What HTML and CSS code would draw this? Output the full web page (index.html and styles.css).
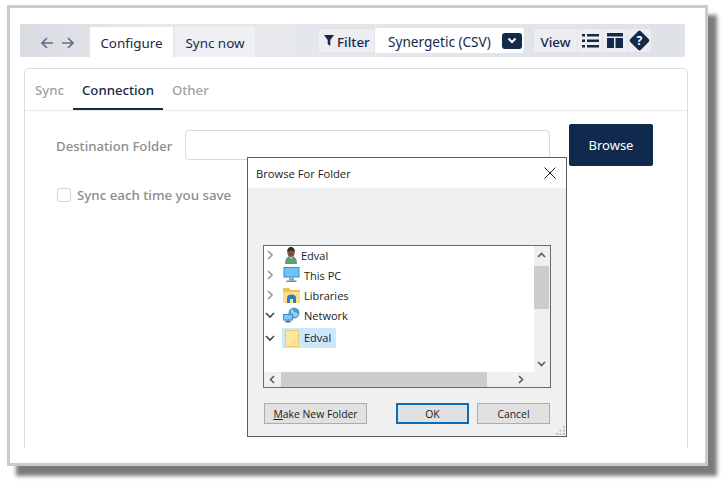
FILE: index.html
```html
<!DOCTYPE html>
<html lang="en">
<head>
<meta charset="utf-8">
<title>Browse For Folder</title>
<link rel="stylesheet" href="styles.css">
</head>
<body>
<div class="frame">
  <div class="toolbar">
    <div class="nav">
      <svg width="14" height="14" viewBox="0 0 14 14" class="arrow"><path d="M13 7H2M7 2L2 7l5 5" /></svg>
      <svg width="14" height="14" viewBox="0 0 14 14" class="arrow"><path d="M1 7h11M7 2l5 5-5 5" /></svg>
    </div>
    <div class="tab tab-active">Configure</div>
    <div class="tab tab-idle">Sync now</div>
    <div class="tools">
      <div class="group filter">
        <svg width="10" height="11" viewBox="0 0 10 11" class="solid"><path d="M0 0h10L6.300 5v6L3.700 9V5z"/></svg>
        <span class="tool-text">Filter</span>
      </div>
      <div class="select">
        <span class="tool-text">Synergetic (CSV)</span>
        <span class="caret"><svg width="10" height="7" viewBox="0 0 10 7"><path d="M1.500 1.500L5 5l3.500-3.500" /></svg></span>
      </div>
      <div class="group view">
        <div class="cell cell-view"><span class="tool-text">View</span></div>
        <div class="cell cell-icon">
          <svg width="17" height="14" viewBox="0 0 17 14" class="solid"><path d="M0 0h3v2.500H0zM5 0h12v2.500H5zM0 5.500h3V8H0zM5 5.500h12V8H5zM0 11h3v2.500H0zM5 11h12v2.500H5z"/></svg>
        </div>
        <div class="cell cell-icon">
          <svg width="16" height="15" viewBox="0 0 16 15" class="solid"><path d="M0 0h16v3.500H0zM0 5h7v10H0zM8.500 5H16v10H8.500z"/></svg>
        </div>
        <div class="cell cell-help">
          <span class="help-mark"><span class="help-q">?</span></span>
        </div>
      </div>
    </div>
  </div>

  <div class="panel">
    <div class="subtabs">
      <div class="subtab">Sync</div>
      <div class="subtab subtab-active">Connection</div>
      <div class="subtab">Other</div>
    </div>
    <div class="form">
      <div class="form-row">
        <label class="field-label">Destination Folder</label>
        <div class="input"></div>
        <button class="browse">Browse</button>
      </div>
      <div class="check-row">
        <span class="checkbox"></span>
        <span class="check-label">Sync each time you save</span>
      </div>
    </div>
  </div>
</div>

<div class="dialog">
  <div class="dialog-title">
    <span>Browse For Folder</span>
    <svg width="12" height="12" viewBox="0 0 12 12" class="close"><path d="M.5.500l11 11M11.500.500l-11 11"/></svg>
  </div>
  <div class="dialog-body">
    <div class="tree">
      <div class="tree-main">
        <div class="tree-rows">
          <div class="row">
            <svg class="chev" width="8" height="10" viewBox="0 0 8 10"><path d="M2 1l4 4-4 4"/></svg>
            <svg class="ico ico-user" width="16" height="17" viewBox="0 0 16 17"><path d="M2 17c0-5 2-8 6-8s6 3 6 8z" fill="#5f9f78"/><path d="M6 9l2 3 2-3z" fill="#d8e8dc"/><ellipse cx="8" cy="5.500" rx="3.600" ry="4.500" fill="#7a5238"/><path d="M4.200 5C4 1.500 6 0 8 0s4 1.500 3.800 5C10.500 3 6 3 4.200 5z" fill="#2b2a28"/></svg>
            <span class="name name-user">Edval</span>
          </div>
          <div class="row">
            <svg class="chev" width="8" height="10" viewBox="0 0 8 10"><path d="M2 1l4 4-4 4"/></svg>
            <svg class="ico" width="17" height="16" viewBox="0 0 17 16"><rect x=".5" y="0" width="16" height="10.500" fill="#2f8fd8"/><rect x="1.500" y="1" width="14" height="8.500" fill="#6cc4f2"/><rect x="6" y="10.500" width="5" height="3" fill="#9aa5ad"/><rect x="3.500" y="13.500" width="10" height="1.500" fill="#77838c"/></svg>
            <span class="name">This PC</span>
          </div>
          <div class="row">
            <svg class="chev" width="8" height="10" viewBox="0 0 8 10"><path d="M2 1l4 4-4 4"/></svg>
            <svg class="ico" width="17" height="16" viewBox="0 0 17 16"><path d="M0 1h6l2 2h9v13H0z" fill="#f2c14e"/><path d="M0 5h17v11H0z" fill="#fbe08c"/><path d="M4 16v-5a4.500 3.500 0 0 1 9 0v5h-3v-4H7v4z" fill="#2c7fc4"/></svg>
            <span class="name">Libraries</span>
          </div>
          <div class="row">
            <svg class="chev chev-open" width="10" height="8" viewBox="0 0 10 8"><path d="M1 2l4 4 4-4"/></svg>
            <svg class="ico" width="17" height="16" viewBox="0 0 17 16"><circle cx="11" cy="6" r="5.500" fill="#4f9bd0"/><path d="M8 2c3 0 2 3 4 3s3 2 3 3-3 3-5 1-3-4-2-7z" fill="#9ccbe6"/><rect x="0" y="7" width="10" height="6.500" fill="#2f8fd8"/><rect x="1" y="8" width="8" height="4.500" fill="#7ccaf4"/><rect x="2.500" y="13.500" width="5" height="2" fill="#55707f"/></svg>
            <span class="name">Network</span>
          </div>
          <div class="row row-selected">
            <svg class="chev chev-open" width="10" height="8" viewBox="0 0 10 8"><path d="M1 2l4 4 4-4"/></svg>
            <div class="sel">
              <svg class="ico" width="14" height="17" viewBox="0 0 14 17"><path d="M.5.500h13v16H.5z" fill="#fde79d" stroke="#e8cd72"/><path d="M9 16.500V11h4.500" fill="none" stroke="#f0d98a"/></svg>
              <span class="name">Edval</span>
            </div>
          </div>
        </div>
        <div class="vscroll">
          <svg width="9" height="6" viewBox="0 0 9 6" class="sb-arrow"><path d="M1 5l3.500-3.500L8 5"/></svg>
          <div class="vtrack"><div class="vthumb"></div></div>
          <svg width="9" height="6" viewBox="0 0 9 6" class="sb-arrow"><path d="M1 1l3.500 3.500L8 1"/></svg>
        </div>
      </div>
      <div class="hscroll">
        <svg width="6" height="9" viewBox="0 0 6 9" class="sb-arrow"><path d="M5 1L1.500 4.500 5 8"/></svg>
        <div class="hthumb"></div>
        <svg width="6" height="9" viewBox="0 0 6 9" class="sb-arrow"><path d="M1 1l3.500 3.500L1 8"/></svg>
      </div>
    </div>
    <div class="dialog-actions">
      <button class="win-btn btn-new"><u>M</u>ake New Folder</button>
      <button class="win-btn btn-ok">OK</button>
      <button class="win-btn btn-cancel">Cancel</button>
    </div>
    <svg class="grip" width="9" height="9" viewBox="0 0 9 9"><path fill="#c0c0c0" d="M7 0h2v2H7zM3.500 3.500h2v2h-2zM7 3.500h2v2H7zM0 7h2v2H0zM3.500 7h2v2h-2zM7 7h2v2H7z"/></svg>
  </div>
</div>
</body>
</html>
```
FILE: styles.css
```css
* { box-sizing: border-box; }
html, body { margin: 0; padding: 0; }
body {
  width: 722px;
  height: 481px;
  background: #fff;
  overflow: hidden;
  position: relative;
  font-family: "Noto Sans", "Open Sans", sans-serif;
  color: #15294b;
}
.frame {
  width: 701px;
  height: 461px;
  margin: 5px 0 0 7px;
  padding: 16px 21px 0 8px;
  background: #fff;
  border: 3px solid #cbcbcb;
  box-shadow: 9px 10px 4px #7b7b7b;
}
.toolbar {
  display: flex;
  width: 665px;
  height: 33px;
  margin-left: 2px;
  padding-top: 3px;
  background: linear-gradient(90deg, #d9dce1, #e7e9ed 20%, #dfe2e7);
}
.nav { display: flex; gap: 7px; width: 70px; padding: 9px 0 0 20px; }
.arrow { fill: none; stroke: #5f7087; stroke-width: 1.700; }
.tab {
  height: 30px;
  font-size: 13.400px;
  line-height: 33px;
  text-align: center;
  color: #15294b;
}
.tab-active { width: 83px; background: #fff; }
.tab-idle { width: 80px; margin-left: 2px; background: #eef0f3; }
.tools { display: flex; align-items: flex-start; margin-left: 62px; padding-top: 1px; }
.tool-text { padding-top: 2px; }
.group {
  display: flex;
  align-items: center;
  height: 25px;
  background: #eceef2;
  border: 1px solid #e0e2e7;
  font-size: 13.400px;
}
.solid { fill: #15294b; }
.filter { width: 58px; gap: 3px; padding-left: 6px; border-radius: 3px 0 0 3px; font-weight: 500; }
.select {
  display: flex;
  align-items: center;
  justify-content: space-between;
  width: 149px;
  height: 25px;
  padding: 0 2px 0 13px;
  background: #fff;
  border-radius: 0 3px 3px 0;
  font-size: 13.600px;
}
.caret {
  display: flex;
  align-items: center;
  justify-content: center;
  width: 20px;
  height: 16px;
  background: #15294b;
  border-radius: 3px;
}
.caret path { fill: none; stroke: #fff; stroke-width: 2; }
.view { width: 119px; margin-left: 9px; border-radius: 3px; }
.cell { display: flex; align-items: center; justify-content: center; height: 100%; border-right: 1px solid #e0e2e7; }
.cell-view { width: 44px; font-weight: 500; }
.cell-icon { width: 25px; }
.cell-help { width: 23px; border-right: 0; }
.help-mark {
  display: flex;
  align-items: center;
  justify-content: center;
  width: 15px;
  height: 15px;
  background: #15294b;
  border-radius: 2px;
  transform: rotate(45deg);
}
.help-q {
  color: #fff;
  font-size: 12px;
  font-weight: 700;
  line-height: 1;
  transform: rotate(-45deg);
}
.panel {
  width: 664px;
  height: 380px;
  margin: 11px 0 0 6px;
  border: 1px solid #dcdcdf;
  border-bottom: 0;
  border-radius: 5px 5px 0 0;
}
.subtabs {
  display: flex;
  height: 42px;
  padding-left: 1px;
  border-bottom: 1px solid #eaeaea;
}
.subtab {
  height: 41px;
  padding: 0 9px;
  font-size: 13.200px;
  line-height: 43px;
  color: #a2a2a2;
  font-weight: 500;
}
.subtab-active {
  color: #15294b;
  border-bottom: 2px solid #15294b;
}
.form { padding: 13px 0 0 31px; }
.form-row { display: flex; align-items: center; }
.field-label { width: 129px; padding-top: 2px; font-size: 13.200px; font-weight: 500; color: #8c8c8c; }
.input {
  width: 365px;
  height: 30px;
  background: #fff;
  border: 1px solid #dadada;
  border-radius: 4px;
}
.browse {
  width: 84px;
  height: 42px;
  margin-left: 19px;
  background: #0f2a4d;
  border: 0;
  border-radius: 2px;
  color: #fff;
  font: 13px "Noto Sans", "Open Sans", sans-serif;
}
.check-row { display: flex; align-items: center; gap: 6px; margin: 20px 0 0 1px; }
.checkbox { width: 14px; height: 14px; border: 1px solid #d4d4d4; border-radius: 2px; background: #fff; }
.check-label { font-size: 13.300px; font-weight: 500; color: #8c8c8c; }

.dialog {
  position: absolute;
  left: 247px;
  top: 157px;
  width: 320px;
  height: 280px;
  display: flex;
  flex-direction: column;
  background: #f0f0f0;
  border: 1px solid #5c5c66;
  font-family: "Open Sans", "Noto Sans", sans-serif;
  color: #1a1a1a;
}
.dialog-title {
  display: flex;
  align-items: center;
  justify-content: space-between;
  height: 30px;
  padding: 0 10px 0 8px;
  background: #fff;
  font-size: 11.200px;
}
.close { fill: none; stroke: #222; stroke-width: 1; }
.dialog-body { position: relative; flex: 1; padding: 57px 15px 0; }
.tree {
  width: 288px;
  height: 143px;
  background: #fff;
  border: 1px solid #6b6b6b;
}
.tree-main { display: flex; height: 126px; }
.tree-rows { flex: 1; margin-top: -1px; }
.row { display: flex; align-items: center; height: 20px; font-size: 11px; }
.row-selected { margin-top: 3px; }
.chev { flex: none; margin-left: 2px; margin-right: 8px; fill: none; stroke: #9a9a9a; stroke-width: 1.600; }
.chev-open { margin-left: 1px; margin-right: 7px; stroke: #444; }
.ico { flex: none; margin-left: 1px; }
.ico-user { margin-right: 2px; }
.name { margin-left: 4px; padding-right: 2px; }
.name-user { margin-left: 0; }
.sel { display: flex; align-items: center; width: 54px; height: 20px; padding-left: 2px; background: #cce8ff; }
.sel .ico { margin-left: 1px; }
.sel .name { margin: 0 0 2px 5px; }
.vscroll { display: flex; flex-direction: column; align-items: center; justify-content: space-between; width: 16px; padding: 6px 1px 5px 0; background: #f0f0f0; }
.vtrack { flex: 1; width: 100%; padding-top: 8px; }
.vthumb { width: 15px; height: 43px; background: #cdcdcd; }
.sb-arrow { flex: none; fill: none; stroke: #606060; stroke-width: 1.700; }
.hscroll { display: flex; align-items: center; height: 15px; padding: 0 25px 0 5px; background: #f0f0f0; }
.hthumb { width: 206px; height: 15px; margin: 0 31px 0 6px; background: #cdcdcd; }
.dialog-actions { display: flex; margin: 15px 0 0 1px; }
.win-btn {
  height: 21px;
  padding: 0;
  background: #e1e1e1;
  border: 1px solid #adadad;
  font: 10.400px "Open Sans", "Noto Sans", sans-serif;
  color: #1a1a1a;
}
.btn-new { width: 103px; }
.btn-ok { width: 73px; margin-left: 29px; border: 2px solid #0a6cb4; }
.btn-cancel { width: 73px; margin-left: 8px; }
.grip { position: absolute; right: 1px; bottom: 1px; }
```
